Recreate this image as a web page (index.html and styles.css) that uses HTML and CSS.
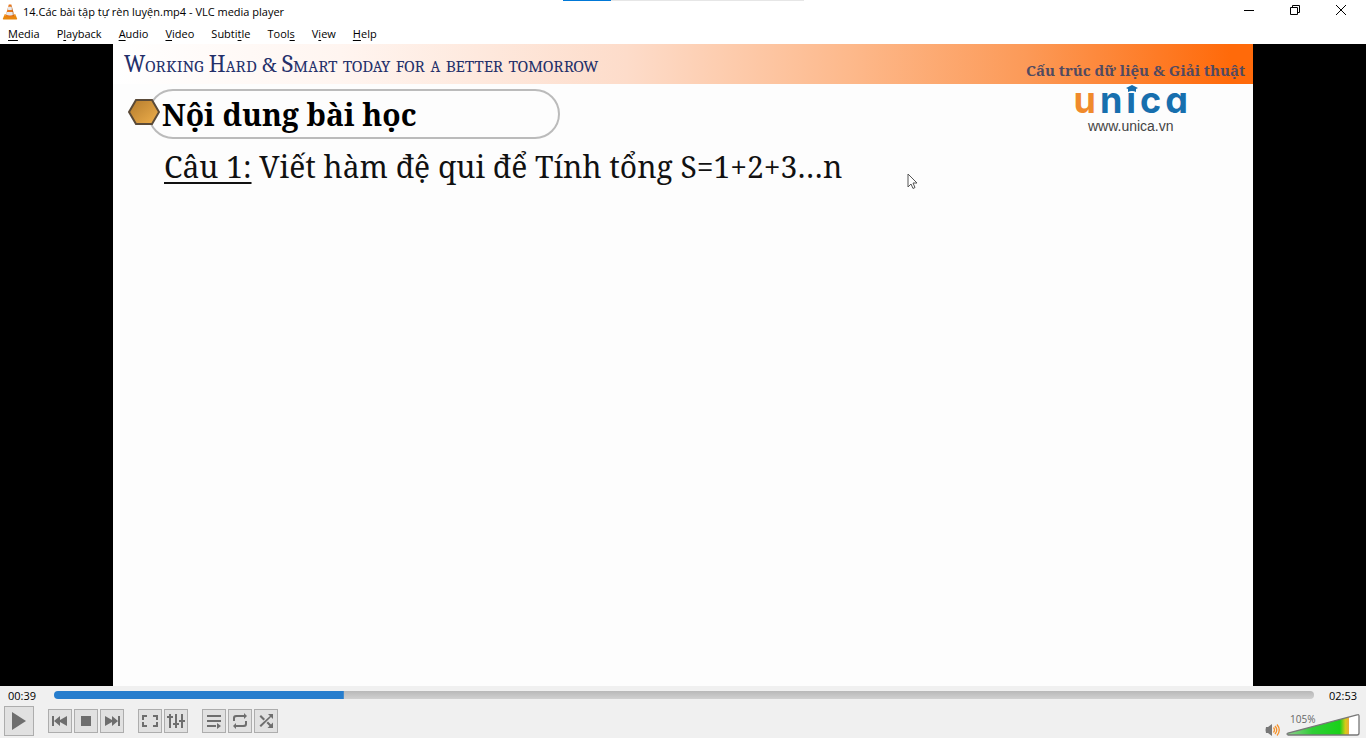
FILE: index.html
```html
<!DOCTYPE html>
<html lang="vi">
<head>
<meta charset="utf-8">
<title>14.Các bài tập tự rèn luyện.mp4 - VLC media player</title>
<link rel="stylesheet" href="styles.css">
</head>
<body>
<div class="player">
  <div class="top-progress"></div>
  <header class="titlebar">
    <svg class="cone" width="16" height="16" viewBox="0 0 16 16" aria-hidden="true">
      <path d="M2.6 10.5h10.8l1.8 4.2q.1.8-.8.8H1.6q-.9 0-.8-.8z" fill="#e8870e"/>
      <path d="M2.6 10.5h10.8l.6 1.6H2z" fill="#f7a63c"/>
      <path d="M6.8.6h2.4l3.2 11.2q-4.4 2.4-8.8 0z" fill="#e9771b"/>
      <path d="M6.2 2.8h3.6l.8 2.8q-2.6 1-5.2 0zM4.7 8h6.6l.8 2.6q-4.1 1.8-8.2 0z" fill="#e6e8ec"/>
      <path d="M9 .6h.4l3 11.2-1.6.8z" fill="#a34c0a" opacity=".35"/>
    </svg>
    <h1 class="title">14.Các bài tập tự rèn luyện.mp4 - VLC media player</h1>
    <div class="window-buttons">
      <button class="window-button" aria-label="Minimize"><svg width="10" height="10" viewBox="0 0 10 10"><path d="M0 5.5h10" stroke="#000"/></svg></button>
      <button class="window-button" aria-label="Restore"><svg width="10" height="10" viewBox="0 0 10 10"><path d="M.5 2.5h7v7h-7zM2.5 2.500v-2h7v7h-2" fill="none" stroke="#000"/></svg></button>
      <button class="window-button" aria-label="Close"><svg width="10" height="10" viewBox="0 0 10 10"><path d="M0 0l10 10M10 0L0 10" stroke="#000"/></svg></button>
    </div>
  </header>
  <nav class="menubar">
    <button class="menu"><u>M</u>edia</button>
    <button class="menu">P<u>l</u>ayback</button>
    <button class="menu"><u>A</u>udio</button>
    <button class="menu"><u>V</u>ideo</button>
    <button class="menu">Subti<u>t</u>le</button>
    <button class="menu">Tool<u>s</u></button>
    <button class="menu">V<u>i</u>ew</button>
    <button class="menu"><u>H</u>elp</button>
  </nav>
  <main class="video">
    <section class="slide">
      <div class="banner">
        <p class="motto">Working Hard <span class="ampersand">&amp;</span> Smart today for a better tomorrow</p>
        <p class="course">Cấu trúc dữ liệu &amp; Giải thuật</p>
      </div>
      <div class="heading-row">
        <div class="heading">
          <svg class="hexagon" width="32" height="28" viewBox="0 0 32 28" aria-hidden="true">
            <defs><linearGradient id="gold" x1="0" y1="0" x2="1" y2="1"><stop offset="0" stop-color="#b37b2d"/><stop offset="1" stop-color="#f0b04c"/></linearGradient></defs>
            <path d="M8 2h16l7 12-7 12H8L1 14z" fill="url(#gold)" stroke="#5a4a38" stroke-width="2"/>
          </svg>
          <h2 class="heading-text">Nội dung bài học</h2>
        </div>
        <div class="brand">
          <div class="logo"><span class="logo-u">u</span><span>n</span><span class="logo-i">ı<svg class="cap" width="12" height="8" viewBox="0 0 12 8" aria-hidden="true"><path d="M0 3l6-3 6 3-2 1v3q-4-2-8 0V4z" fill="#176fae"/></svg></span><span>c</span><span>a</span></div>
          <div class="site">www.unica.vn</div>
        </div>
      </div>
      <p class="question"><u>Câu 1:</u> Viết hàm đệ qui để Tính tổng S=1+2+3…n</p>
      <svg class="pointer" width="11" height="17" viewBox="0 0 11 17" aria-hidden="true"><path d="M1 1v13l3-3 2 4.500 2-1-2-4.500h4z" fill="#fff" stroke="#555"/></svg>
    </section>
  </main>
  <footer class="controls">
    <div class="seek-row">
      <span class="time">00:39</span>
      <input class="seek" type="range" min="0" max="173" value="39" aria-label="Position">
      <span class="time">02:53</span>
    </div>
    <div class="button-row">
      <button class="tool play" aria-label="Play"><svg width="16" height="18" viewBox="0 0 16 18"><path d="M1 0l14 9-14 9z"/></svg></button>
      <div class="tool-group">
        <button class="tool" aria-label="Previous"><svg width="16" height="16" viewBox="0 0 16 16"><path d="M0 3h2v10H0zM8 3v4l7-4v10l-7-4v4L2 8z"/></svg></button>
        <button class="tool" aria-label="Stop"><svg width="16" height="16" viewBox="0 0 16 16"><path d="M3 3h10v10H3z"/></svg></button>
        <button class="tool" aria-label="Next"><svg width="16" height="16" viewBox="0 0 16 16"><path d="M14 3h2v10h-2zM8 3v4L1 3v10l7-4v4l6-5z"/></svg></button>
      </div>
      <div class="tool-group">
        <button class="tool" aria-label="Fullscreen"><svg width="18" height="16" viewBox="0 0 18 16"><path d="M1 2h5v2H3v3H1zM12 2h5v5h-2V4h-3zM1 9h2v3h3v2H1zM15 9h2v5h-5v-2h3z"/></svg></button>
        <button class="tool" aria-label="Extended settings"><svg width="18" height="16" viewBox="0 0 18 16"><path d="M2 1h2v2h2v2H4v10H2V5H0V3h2zM8 1h2v9h2v2h-2v3H8v-3H6v-2h2zM14 1h2v6h2v2h-2v6h-2V9h-2V7h2z"/></svg></button>
      </div>
      <div class="tool-group">
        <button class="tool" aria-label="Playlist"><svg width="16" height="16" viewBox="0 0 16 16"><path d="M1 2h14v2H1zM1 7h14v2H1zM1 12h9v2H1zM11 10l4 3-4 3z"/></svg></button>
        <button class="tool" aria-label="Loop"><svg width="16" height="16" viewBox="0 0 16 16"><path d="M1 8V5q0-3 3-3h8V0l3 3-3 3V4H5q-2 0-2 1v3zM15 8v3q0 3-3 3H4v2l-3-3 3-3v2h7q2 0 2-1V8z"/></svg></button>
        <button class="tool" aria-label="Random"><svg width="16" height="16" viewBox="0 0 16 16"><path d="M10 1h5v5l-2-2L3 14l-1.500-1.500L12 3zM3 2l4 4-1.500 1.500-4-4zM10 8.500l3 3 2-2V15h-5.500l2-2-3-3z"/></svg></button>
      </div>
      <div class="sound">
        <button class="mute" aria-label="Mute"><svg width="15" height="14" viewBox="0 0 15 14"><path d="M1 4h2l4-3v12l-4-3H1q-1-3 0-6z" fill="#777"/><path d="M8.500 4.500q2 2.500 0 5M10 3q3.500 4 0 8M12 1.500q4.500 5.500 0 11" fill="none" stroke="#f5922b" stroke-width="1.300"/></svg></button>
        <label class="volume">
          <span class="volume-text">105%</span>
          <svg class="wedge" width="74" height="24" viewBox="0 0 74 24" aria-hidden="true">
            <defs><linearGradient id="level"><stop offset="0" stop-color="#8fce8f"/><stop offset=".4" stop-color="#30ce37"/><stop offset=".85" stop-color="#19d119"/><stop offset=".94" stop-color="#d5cc16"/><stop offset="1" stop-color="#eda83a"/></linearGradient></defs>
            <path d="M2 22v-2L71 2q2-1 2 1v19z" fill="#fff"/>
            <path d="M2 22v-2L63 4v18z" fill="url(#level)"/>
            <path d="M2 22q-2-1 0-2L71 2q2-1 2 1v17q0 2-2 2z" fill="none" stroke="#777" stroke-width="1.300"/>
          </svg>
          <input class="volume-input" type="range" min="0" max="125" value="105" aria-label="Volume">
        </label>
      </div>
    </div>
  </footer>
</div>
</body>
</html>
```
FILE: styles.css
```css
* { box-sizing: border-box; }
body { margin: 0; font-family: "Segoe UI", "Open Sans", "Noto Sans", sans-serif; font-size: 11px; color: #000; }
h1, h2, p { margin: 0; font-weight: 400; }
button { padding: 0; border: 0; background: none; font: inherit; color: inherit; }
svg { display: block; flex: none; }
.player { position: relative; display: flex; flex-direction: column; height: 100vh; background: #fff; overflow: hidden; }
.top-progress { position: absolute; top: 0; left: 563px; width: 241px; height: 1px; background: linear-gradient(90deg, #0078d7 20%, #e6e6e6 20%); }
.titlebar { display: flex; align-items: center; height: 23px; padding: 0 2px; gap: 5px; }
.title { flex: 1; font-size: 11px; }
.window-buttons { display: flex; align-self: flex-start; }
.window-button { display: grid; place-items: center; width: 46px; height: 20px; }
.menubar { display: flex; gap: 1px; height: 21px; }
.menu { padding: 0 8px; line-height: 20px; }
.menu u { text-underline-offset: 2px; }
.video { flex: 1; min-height: 0; display: flex; justify-content: center; background: #000; }
.slide { position: relative; height: 100%; aspect-ratio: 1140 / 642; background: #fdfdfd; font-family: "Noto Serif", "Droid Serif", Cambria, "Liberation Serif", serif; }
.banner { display: flex; justify-content: space-between; height: 40px; padding: 0 8px 0 11px; background: linear-gradient(90deg, #fff 0%, #fff5f0 20%, #fddcca 45%, #fdb88a 65%, #fc9a58 80%, #ff6a0a 98%); }
.motto { font-family: Cambria, Caladea, "Liberation Serif", serif; font-size: 24px; line-height: 40px; font-variant: small-caps; color: #24306a; }
.ampersand { font-family: "Noto Serif", serif; font-size: 20px; line-height: 20px; font-variant: normal; }
.course { padding-top: 15px; font-size: 15px; line-height: 22px; font-weight: 700; color: #514a60; }
.heading-row { display: flex; justify-content: space-between; align-items: flex-start; padding: 0 65px 0 35px; }
.heading { position: relative; width: 412px; height: 50px; margin-top: 5px; padding-left: 12px; border: 2px solid #bbb; border-radius: 25px; }
.hexagon { position: absolute; left: -22px; top: 7px; }
.heading-text { font-size: 30px; line-height: 48px; font-weight: 700; }
.brand { display: flex; flex-direction: column; align-items: center; font-family: "Liberation Sans", Arial, sans-serif; }
.logo { display: flex; gap: 4px; font-family: Inter, sans-serif; font-feature-settings: "cv11"; font-size: 36px; line-height: 32px; font-weight: 700; color: #176fae; }
.logo-u { color: #f08a2c; }
.logo-i { position: relative; }
.cap { position: absolute; top: 1px; left: 0; }
.site { font-size: 14px; line-height: 20px; color: #444; }
.question { padding: 6px 0 0 51px; font-size: 30px; line-height: 44px; color: #111; }
.question u { text-decoration-thickness: 2px; text-underline-offset: 4px; }
.pointer { position: absolute; left: 794px; top: 129px; }
.controls { height: 52px; background: #f0f0f0; }
.seek-row { display: flex; align-items: center; height: 19px; padding: 0 6px 0 8px; gap: 15px; }
.time { min-width: 31px; white-space: nowrap; }
.seek { flex: 1; min-width: 0; height: 8px; margin: 0 0 1px; appearance: none; border-radius: 4px; background: linear-gradient(90deg, #267dcd, #267dcd) 0 0 / 23% 100% no-repeat, linear-gradient(#b8b8b8, #d0d0d0); }
.seek::-webkit-slider-thumb { appearance: none; width: 1px; height: 8px; background: transparent; }
.button-row { display: flex; align-items: center; height: 32px; padding: 0 6px 0 4px; }
.tool { display: grid; place-items: center; width: 24px; height: 24px; border: 1px solid #adadad; background: #e1e1e1; }
.tool svg { fill: #6e6e6e; }
.play { width: 30px; height: 30px; }
.tool-group { display: flex; gap: 2px; margin-left: 14px; }
.sound { display: flex; align-items: flex-end; align-self: flex-end; gap: 6px; margin-left: auto; }
.volume { position: relative; }
.volume-text { position: absolute; left: 4px; top: 0; font-size: 10px; line-height: 12px; color: #666; }
.volume-input { position: absolute; inset: 0; width: 100%; height: 100%; margin: 0; opacity: 0; }
```
